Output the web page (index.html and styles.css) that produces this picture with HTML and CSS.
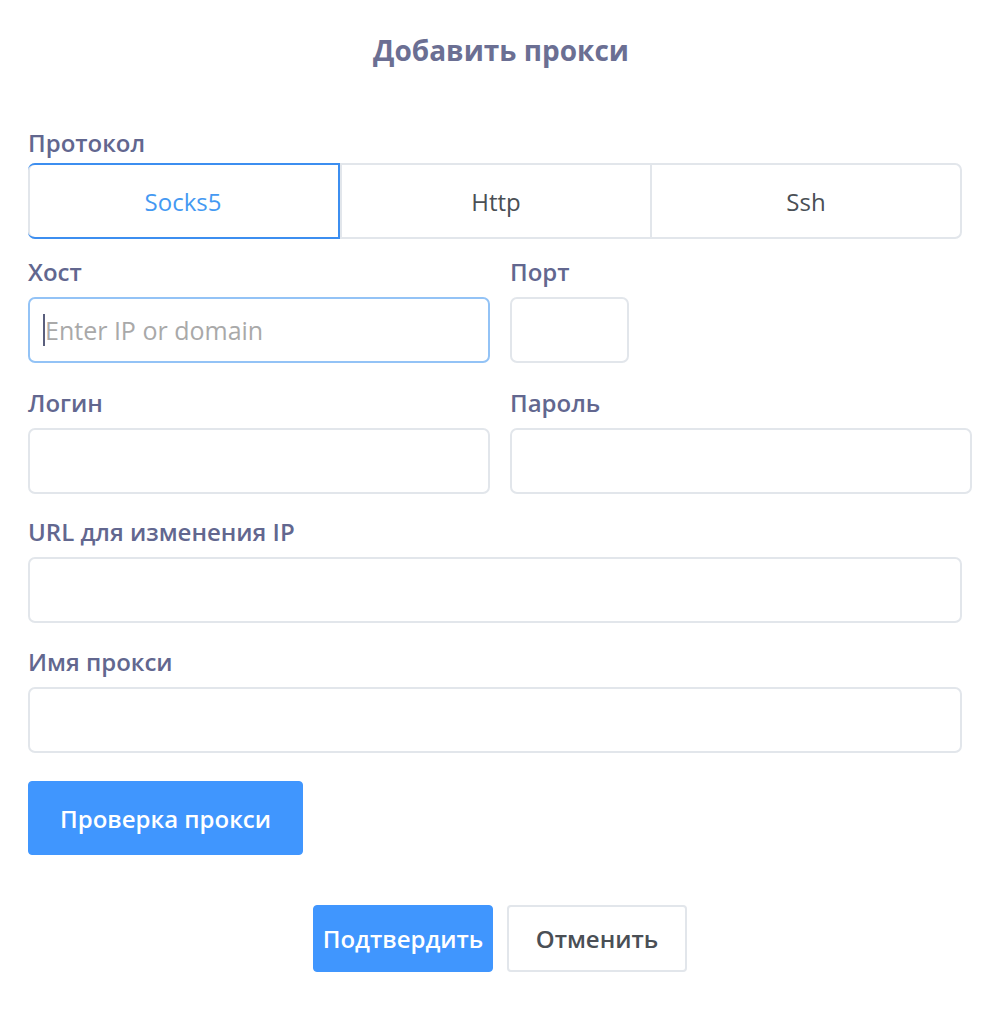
FILE: index.html
```html
<!DOCTYPE html>
<html lang="ru">
<head>
<meta charset="utf-8">
<title>Добавить прокси</title>
<link rel="stylesheet" href="styles.css">
</head>
<body>
<div class="dialog">
  <h1 class="title">Добавить прокси</h1>

  <div class="field">
    <div class="label label-tight">Протокол</div>
    <div class="segmented">
      <div class="seg seg-active">Socks5</div>
      <div class="seg">Http</div>
      <div class="seg">Ssh</div>
    </div>
  </div>

  <div class="grid">
    <div class="field">
      <div class="label">Хост</div>
      <div class="input input-focus"><span class="caret"></span><span class="placeholder">Enter IP or domain</span></div>
    </div>
    <div class="field">
      <div class="label">Порт</div>
      <div class="input input-port"></div>
    </div>
    <div class="field">
      <div class="label">Логин</div>
      <div class="input"></div>
    </div>
    <div class="field">
      <div class="label">Пароль</div>
      <div class="input"></div>
    </div>
  </div>

  <div class="field">
    <div class="label">URL для изменения IP</div>
    <div class="input input-wide"></div>
  </div>

  <div class="field">
    <div class="label">Имя прокси</div>
    <div class="input input-wide"></div>
  </div>

  <button class="btn btn-primary btn-check">Проверка прокси</button>

  <div class="footer">
    <button class="btn btn-primary btn-footer">Подтвердить</button>
    <button class="btn btn-default btn-footer">Отменить</button>
  </div>
</div>
</body>
</html>
```

FILE: styles.css
```css
* { box-sizing: border-box; }

html, body {
  margin: 0;
  padding: 0;
  background: #ffffff;
}

body {
  font-family: "Open Sans", "Liberation Sans", sans-serif;
  color: #4a4f55;
}

.dialog {
  width: 1002px;
  padding: 32px 30px 0 28px;
}

.title {
  margin: 0;
  text-align: center;
  font-size: 28px;
  line-height: 36px;
  font-weight: 700;
  color: #6b6f93;
  padding-left: 2px;
}

.field {
  margin-top: 21px;
}

.title + .field {
  margin-top: 62px;
}

.label {
  font-size: 24px;
  line-height: 26px;
  font-weight: 600;
  color: #62678f;
  margin-bottom: 12px;
}

.label-tight {
  margin-bottom: 7px;
}

.segmented {
  display: flex;
  width: 934px;
  height: 76px;
  border: 2px solid #e2e6eb;
  border-radius: 7px;
}

.seg {
  flex: 1;
  display: flex;
  align-items: center;
  justify-content: center;
  font-size: 24px;
  color: #4a4f55;
  border-left: 2px solid #e2e6eb;
}

.seg:first-child {
  border-left: none;
}

.seg-active {
  color: #4499f2;
  margin: -2px 0 -2px -2px;
  border: 2px solid #3c8ef0;
  border-radius: 7px 0 0 7px;
  flex: 0 0 312px;
}

.grid {
  display: grid;
  grid-template-columns: 462px 462px;
  column-gap: 20px;
}

.grid .field {
  margin-top: 27px;
}

.grid .field:nth-child(-n+2) {
  margin-top: 20px;
}

.grid + .field {
  margin-top: 25px;
}

.grid + .field + .field {
  margin-top: 26px;
}

.input {
  height: 66px;
  border: 2px solid #e2e6eb;
  border-radius: 7px;
  display: flex;
  align-items: center;
  padding-left: 13px;
  background: #fff;
}

.input-focus {
  border-color: #93c3f6;
}

.input-port {
  width: 119px;
}

.input-wide {
  width: 934px;
}

.caret {
  width: 2px;
  height: 32px;
  background: #5a5f7d;
}

.placeholder {
  font-size: 25px;
  color: #a9a9a9;
  font-family: "Open Sans", "Liberation Sans", sans-serif;
}

.btn {
  font-family: "Open Sans", "Liberation Sans", sans-serif;
  font-size: 24px;
  font-weight: 600;
  border-radius: 4px;
  cursor: pointer;
  display: block;
  padding: 0;
}

.btn-primary {
  background: #4096fe;
  color: #ffffff;
  border: 1px solid #4096fe;
}

.btn-default {
  background: #ffffff;
  color: #4a4f55;
  border: 2px solid #e2e6eb;
}

.btn-check {
  margin-top: 28px;
  width: 275px;
  height: 74px;
}

.footer {
  display: flex;
  justify-content: center;
  gap: 14px;
  margin-top: 50px;
}

.btn-footer {
  width: 180px;
  height: 67px;
}
```
